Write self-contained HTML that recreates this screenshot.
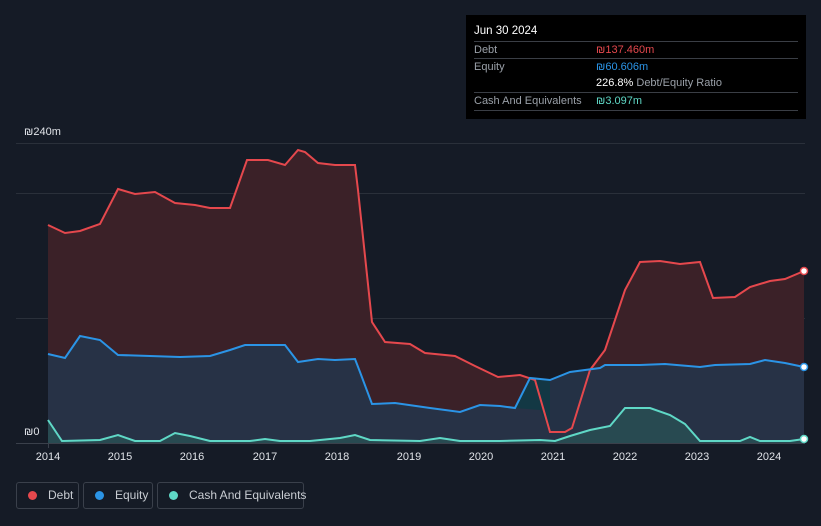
<!DOCTYPE html>
<html><head><style>
body{margin:0;width:821px;height:526px;background:#151b26;font-family:"Liberation Sans",sans-serif;overflow:hidden;position:relative}
.tt{position:absolute;left:466px;top:15px;width:340px;height:104px;background:#000;color:#fff;font-size:11px}
.tt .r{position:absolute;left:8px;right:8px;border-top:1px solid #3a3e45;height:17px;line-height:17px;color:#9aa0a8}
.tt .v{position:absolute;left:122px;top:0}
.leg{position:absolute;top:482px;height:27px;border:1px solid #3a404b;border-radius:3px;color:#c8ccd2;font-size:12px;line-height:25px;box-sizing:border-box;white-space:nowrap}
.leg i{display:inline-block;width:9px;height:9px;border-radius:50%;margin:0 11px 0 11px;vertical-align:-1px}
.ax{position:absolute;color:#e0e3e8;font-size:11px}
</style></head><body>
<div class="tt">
<div style="position:absolute;left:8px;top:10px;font-size:11.5px">Jun 30 2024</div>
<div class="r" style="top:26px">Debt<span class="v" style="color:#e5484d">₪137.460m</span></div>
<div class="r" style="top:43px">Equity<span class="v" style="color:#2b94e6">₪60.606m</span></div>
<div class="r" style="top:60px;border-top:none"><span class="v" style="color:#fff">226.8% <span style="color:#9aa0a8">Debt/Equity Ratio</span></span></div>
<div class="r" style="top:77px">Cash And Equivalents<span class="v" style="color:#5fd8c6">₪3.097m</span></div>
<div class="r" style="top:95px;height:0"></div>
</div>
<div class="ax" style="left:24px;top:126px">₪240m</div>
<div class="ax" style="left:24px;top:426px">₪0</div>
<svg width="821" height="526" style="position:absolute;left:0;top:0">
<g stroke="#2a303a" stroke-width="1"><line x1="16" y1="143.5" x2="805" y2="143.5"/><line x1="16" y1="193.5" x2="805" y2="193.5"/><line x1="16" y1="318.5" x2="805" y2="318.5"/></g>
<path fill="#3b2128" stroke="none" d="M48,225 L65,233 80,231 100,224 118,189 135,194 155,192 175,203 195,205 210,208 230,208 247,160 268,160 285,165 298,150 305,152 318,163 335,165 355,165 358,190 372,322 385,342 410,344 425,353 455,356 475,366 498,377 520,375 535,380 550,432 565,432 572,428 590,370 605,350 625,290 640,262 660,261 680,264 700,262 713,298 735,297 750,287 770,281 785,279 804,271 L804,443 48,443Z"/>
<path fill="#263449" fill-opacity="0.9" d="M48,354 L65,358 80,336 100,340 118,355 150,356 180,357 210,356 230,350 245,345 285,345 298,362 318,359 335,360 355,359 360,372 372,404 395,403 430,408 460,412 480,405 500,406 515,408 530,378 550,380 570,372 600,368 605,365 640,365 665,364 700,367 715,365 750,364 765,360 785,363 804,367 L804,443 48,443Z"/>
<path fill="#0f3a44" d="M515,408 530,378 550,380 550,432 540,410Z" opacity="0.8"/>
<path fill="#2a5a58" fill-opacity="0.6" d="M48,420 L62,441 100,440 118,435 135,441 160,441 175,433 190,436 210,441 250,441 265,439 280,441 310,441 340,438 355,435 370,440 420,441 440,438 460,441 500,441 540,440 555,441 570,436 590,430 610,426 625,408 650,408 670,415 685,424 700,441 740,441 750,437 760,441 790,441 804,439 L804,443 48,443Z"/>
<polyline fill="none" stroke="#e5484d" stroke-width="2" points="48,225 65,233 80,231 100,224 118,189 135,194 155,192 175,203 195,205 210,208 230,208 247,160 268,160 285,165 298,150 305,152 318,163 335,165 355,165 358,190 372,322 385,342 410,344 425,353 455,356 475,366 498,377 520,375 535,380 550,432 565,432 572,428 590,370 605,350 625,290 640,262 660,261 680,264 700,262 713,298 735,297 750,287 770,281 785,279 804,271"/>
<polyline fill="none" stroke="#2b94e6" stroke-width="2" points="48,354 65,358 80,336 100,340 118,355 150,356 180,357 210,356 230,350 245,345 285,345 298,362 318,359 335,360 355,359 360,372 372,404 395,403 430,408 460,412 480,405 500,406 515,408 530,378 550,380 570,372 600,368 605,365 640,365 665,364 700,367 715,365 750,364 765,360 785,363 804,367"/>
<polyline fill="none" stroke="#5fd8c6" stroke-width="2" points="48,420 62,441 100,440 118,435 135,441 160,441 175,433 190,436 210,441 250,441 265,439 280,441 310,441 340,438 355,435 370,440 420,441 440,438 460,441 500,441 540,440 555,441 570,436 590,430 610,426 625,408 650,408 670,415 685,424 700,441 740,441 750,437 760,441 790,441 804,439"/>
<line x1="16" y1="443.5" x2="805" y2="443.5" stroke="#3a404b"/>
<g stroke="#3a404b"><line x1="48.5" y1="443" x2="48.5" y2="448"/></g>
<circle cx="804" cy="271" r="3.5" fill="#fff" stroke="#e5484d" stroke-width="1.5"/>
<circle cx="804" cy="367" r="3.5" fill="#fff" stroke="#2b94e6" stroke-width="1.5"/>
<circle cx="804" cy="439" r="3.5" fill="#fff" stroke="#5fd8c6" stroke-width="1.5"/>
<g fill="#e0e3e8" font-size="11" text-anchor="middle" font-family="Liberation Sans">
<text x="48" y="460">2014</text><text x="120" y="460">2015</text><text x="192" y="460">2016</text><text x="265" y="460">2017</text><text x="337" y="460">2018</text><text x="409" y="460">2019</text><text x="481" y="460">2020</text><text x="553" y="460">2021</text><text x="625" y="460">2022</text><text x="697" y="460">2023</text><text x="769" y="460">2024</text></g>
</svg>
<div class="leg" style="left:16px;width:63px"><i style="background:#e5484d"></i>Debt</div>
<div class="leg" style="left:83px;width:70px"><i style="background:#2b94e6"></i>Equity</div>
<div class="leg" style="left:157px;width:147px"><i style="background:#5fd8c6"></i>Cash And Equivalents</div>
</body></html>
